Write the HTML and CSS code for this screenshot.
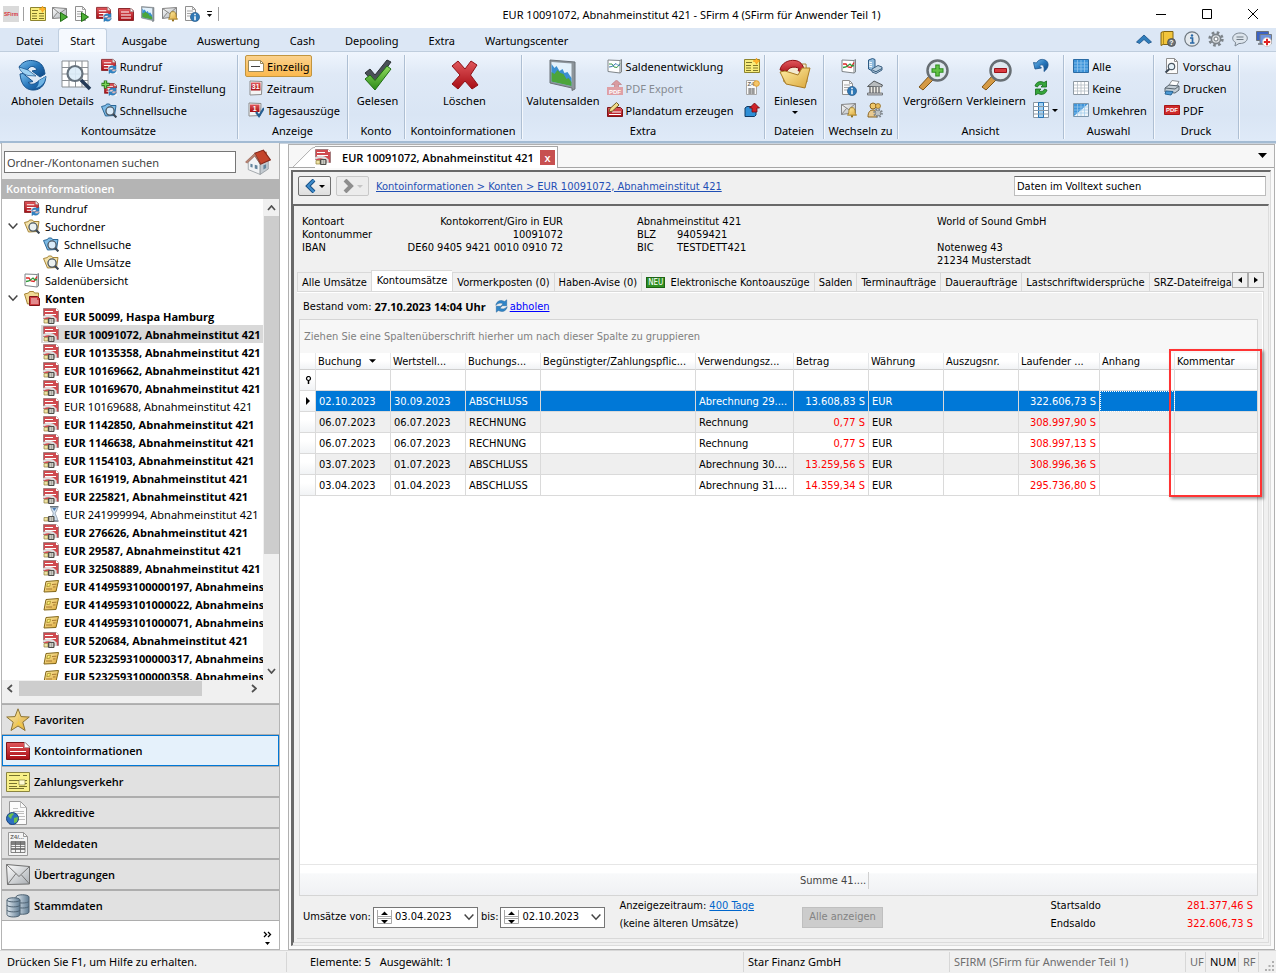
FILE: index.html
```html
<!DOCTYPE html>
<html lang="de">
<head>
    <meta charset="UTF-8">
    <meta name="viewport" content="width=device-width, initial-scale=1.0">
    <title>EUR 10091072, Abnahmeinstitut 421 - SFirm 4</title>
    <link rel="stylesheet" href="styles.css">
</head>
<body>
    <!-- icon sprite -->
    <svg class="sprite" width="0" height="0" aria-hidden="true">
        <defs>
            <linearGradient id="g-red" x1="0" y1="0" x2="0" y2="1"><stop offset="0" stop-color="#e0575c"/><stop offset="1" stop-color="#a80d14"/></linearGradient>
            <linearGradient id="g-blue" x1="0" y1="0" x2="1" y2="1"><stop offset="0" stop-color="#7cc0ee"/><stop offset="0.5" stop-color="#2878bd"/><stop offset="1" stop-color="#0c4380"/></linearGradient>
            <linearGradient id="g-green" x1="0" y1="0" x2="0" y2="1"><stop offset="0" stop-color="#8fdc5e"/><stop offset="1" stop-color="#2c8a17"/></linearGradient>
            <linearGradient id="g-gold" x1="0" y1="0" x2="1" y2="1"><stop offset="0" stop-color="#fff0a8"/><stop offset="1" stop-color="#dba63a"/></linearGradient>
            <linearGradient id="g-grey" x1="0" y1="0" x2="1" y2="1"><stop offset="0" stop-color="#ffffff"/><stop offset="1" stop-color="#a9aeb3"/></linearGradient>
            <linearGradient id="g-steel" x1="0" y1="0" x2="1" y2="0"><stop offset="0" stop-color="#dfe8ef"/><stop offset="1" stop-color="#5f7b92"/></linearGradient>
        </defs>

        <!-- small parts reused by other icons -->
        <symbol id="p-sync" viewBox="0 0 8 8"><path d="M.5 3.600C.8 1.600 2.400.4 4.400.7L6 1.200 7.200.2v3.600H3.800L5 2.600C3.400 1.800 2 2.200.5 3.600z" fill="#2f86c9" stroke="#1d5c94" stroke-width=".3"/><path d="M7.500 4.400C7.200 6.400 5.600 7.600 3.600 7.300L2 6.800.8 7.800V4.200h3.400L3 5.400c1.600.8 3 .4 4.500-1z" fill="#2f86c9" stroke="#1d5c94" stroke-width=".3"/></symbol>
        <symbol id="p-reddoc" viewBox="0 0 16 14"><path d="M.5 1.500h12.500l2.500 2.500v9.500h-15z" fill="url(#g-red)" stroke="#8c2a2e"/><path d="M12.500 1v3.500h3z" fill="#fff" stroke="#999" stroke-width=".6"/><path d="M3 5h8M3 8h10M3 11h10" stroke="#fff" stroke-width="1.100"/></symbol>
        <symbol id="p-lens" viewBox="0 0 10 10"><path d="M6.500 6.500l3 3" stroke="#3b4754" stroke-width="1.800"/><circle cx="4.200" cy="4.200" r="3.400" fill="#e9f3fb" fill-opacity=".85" stroke="#4b5762" stroke-width="1.100"/></symbol>
        <symbol id="p-info" viewBox="0 0 10 10"><circle cx="5" cy="5" r="4.600" fill="#2f78b5" stroke="#1c4f80" stroke-width=".6"/><path d="M5 1.800v1.400M5 4.300v4" stroke="#fff" stroke-width="1.500"/></symbol>
        <symbol id="p-gear" viewBox="0 0 16 16"><circle cx="8" cy="8" r="6.400" fill="none" stroke="#7c8389" stroke-width="2.600" stroke-dasharray="2.600 2.420"/><circle cx="8" cy="8" r="4.600" fill="#d8dcdf" stroke="#7c8389" stroke-width="1.600"/><circle cx="8" cy="8" r="2" fill="#fff" stroke="#6f767c"/></symbol>
        <symbol id="p-bell" viewBox="0 0 10 11"><path d="M5 .6c2.400 0 3.200 2 3.200 4 0 1.800.5 2.700 1.400 3.600H.4C1.300 7.300 1.800 6.400 1.800 4.600 1.800 2.600 2.600.6 5 .6z" fill="url(#g-gold)" stroke="#94701a" stroke-width=".8"/><circle cx="5" cy="9.400" r="1.100" fill="#94701a"/></symbol>

        <symbol id="i-form" viewBox="0 0 16 16"><path d="M.5 1.500h15v13H.5z" fill="#f8ec7c" stroke="#8d842e"/><path d="M2 4.500h6M2 7.500h5M2 10h5M2 12.500h5M9 7.500h5M9 10h5M9 12.500h5" stroke="#7e7628" stroke-width="1.100"/><path d="M12.500 0l1 2.200L16 3l-2.300 1-1.200 2.300-1-2.300L9 3l2.500-.8z" fill="#ffb52b" stroke="#f08c00" stroke-width=".5"/></symbol>
        <symbol id="i-mailrun" viewBox="0 0 16 16"><path d="M.5 1.500l14 1v9l-14 1z" fill="url(#g-grey)" stroke="#858585"/><path d="M.5 1.500l7 6 7-5M.5 12.500l5-6" fill="none" stroke="#858585"/><path d="M8.500 6.500v9l7-4.500z" fill="#4cae35" stroke="#1f6d12"/></symbol>
        <symbol id="i-docrun" viewBox="0 0 16 16"><path d="M1.500.5h7l3 3v11h-10z" fill="#fafafa" stroke="#8f8f8f"/><path d="M8.500.5v3h3M3 5.500h6M3 8h4M3 10.500h4" fill="none" stroke="#a5a5a5"/><path d="M7.500 6.500v9l7-4.500z" fill="#4cae35" stroke="#1f6d12"/></symbol>
        <symbol id="i-redsync" viewBox="0 0 16 16"><use href="#p-reddoc" x="0" y="0" width="15" height="13"/><path d="M7 8h9v8H7z" fill="#fff" fill-opacity=".7"/><use href="#p-sync" x="7" y="7" width="9" height="9"/></symbol>
        <symbol id="i-red" viewBox="0 0 16 16"><use href="#p-reddoc" x="0" y="1" width="16" height="14"/></symbol>
        <symbol id="i-chart" viewBox="0 0 32 32"><path d="M3 1l25 2v27l-3 1.500V29L3 24z" fill="#8d959b" stroke="#6b7278"/><path d="M4.500 3l20 1.500V27l-20-4.500z" fill="#e3f1fb"/><path d="M4.500 5l3 4 2-2 3 5 3-2 2 4 3-1 4 6v8l-20-4.500z" fill="#3b8fd0"/><path d="M4.500 13l3 2 3-4 3 3 3 1 3 5 2-1 3 4v4l-20-4.500z" fill="#4ca53a"/></symbol>
        <symbol id="i-mailbell" viewBox="0 0 16 16"><path d="M.5 2.500l14-1v9l-14 2z" fill="url(#g-grey)" stroke="#858585"/><path d="M.5 2.500l7 5 7-6M.500 12.500l5-6" fill="none" stroke="#858585"/><use href="#p-bell" x="6" y="5" width="10" height="11"/></symbol>
        <symbol id="i-docinfo" viewBox="0 0 16 16"><path d="M1.500.5h7l3 3v11h-10z" fill="#fafafa" stroke="#8f8f8f"/><path d="M8.500.5v3h3M3 5h6M3 7.500h5M3 10h3" fill="none" stroke="#a5a5a5"/><use href="#p-info" x="6" y="6" width="10" height="10"/></symbol>
        <symbol id="i-sync" viewBox="0 0 32 32"><path d="M2 8C6 2 12 .5 18 2c6 1.500 9 5 10 13l-5 3-8-6 5-1c-2-4-6-5-9-1l-2 4z" fill="url(#g-blue)" stroke="#17528c"/><path d="M2 8l9 3 8 6-8-.5C6 15 3 12 2 8z" fill="#9fd2f3" stroke="#17528c" stroke-width=".7"/><path d="M3 15l3-.5 10 8-5 1c3 3 7 2 11-2l7-4-1 5c-2 6-7 9-13 8.500-6-.5-11-5-12-16z" fill="url(#g-blue)" stroke="#17528c"/><path d="M22 21.500l7-4-2 6c-2 3-5 5-8 5.500 2-2 3-4 3-7.500z" fill="#6fb4e4"/></symbol>
        <symbol id="i-details" viewBox="0 0 32 32"><path d="M2 2h26v26H2zM9 2v26M15.500 2v26M22 2v26M2 8.500h26M2 15h26M2 21.500h26" fill="#fff" stroke="#8a8f94"/><path d="M21 21l9 9" stroke="#243a57" stroke-width="3.500"/><circle cx="15" cy="14.500" r="7.500" fill="#dcecf8" fill-opacity=".9" stroke="#66727d" stroke-width="2.200"/></symbol>
        <symbol id="i-redadd" viewBox="0 0 16 16"><use href="#p-reddoc" x="3" y="2" width="13" height="12"/><path d="M7 8h9v8H7z" fill="#fff" fill-opacity=".7"/><use href="#p-sync" x="7" y="7" width="9" height="9"/><path d="M4.500.5v8M.5 4.500h8" stroke="#1c6d12" stroke-width="3.400"/><path d="M4.500 1v7M1 4.500h7" stroke="#7bd35a" stroke-width="1.600"/></symbol>
        <symbol id="i-search-blue" viewBox="0 0 16 16"><path d="M.5 4.500l4-1 1-1.500h3l1 1.500h5.500l-1.500 10-9 .5z" fill="#7dbbe6" stroke="#2a6797"/><use href="#p-lens" x="4" y="4" width="12" height="12"/></symbol>
        <symbol id="i-search-gold" viewBox="0 0 16 16"><path d="M.5 4.500l4-1 1-1.500h3l1 1.500h5.500l-1.500 10-9 .5z" fill="#f4e3ab" stroke="#a58436"/><use href="#p-lens" x="4" y="4" width="12" height="12"/></symbol>
        <symbol id="i-oneline" viewBox="0 0 16 16"><path d="M.5 2.500h12l3 3v8H.5z" fill="#fff" stroke="#9c8a5a"/><path d="M12.500 2.500v3h3" fill="none" stroke="#9c8a5a"/><path d="M3 8.500h9" stroke="#444"/></symbol>
        <symbol id="i-check" viewBox="0 0 32 32"><path d="M3 14l5-4 5 6L25 1l4 2-16 22z" fill="#4a5157" stroke="#2c3135"/><path d="M3 20l5-4 5 5.500L25 7l4 3-16 21z" fill="url(#g-green)" stroke="#1f6d12"/></symbol>
        <symbol id="i-x" viewBox="0 0 32 32"><path d="M3 7l6-5 7 8 6-8 6 4-6.500 10L29 26l-6 4-7-8-7 8-6-5 8-9z" fill="url(#g-red)" stroke="#8e1015"/></symbol>
        <symbol id="i-line" viewBox="0 0 16 16"><path d="M1 2l12 .5 1.500-1V14L13 15 1 13.500z" fill="#fff" stroke="#7e8488"/><path d="M13 2.500V15" stroke="#7e8488"/><path d="M2 6h3l2 3 3 .5 3-5" fill="none" stroke="#df2626" stroke-width="1.300"/><path d="M2 9.500l3-.5 4-3 2 2 2-.5" fill="none" stroke="#2e9a3a" stroke-width="1.300"/></symbol>
        <symbol id="i-line-soft" viewBox="0 0 16 16"><path d="M1 2l12 .5 1.500-1V14L13 15 1 13.500z" fill="#fff" stroke="#7e8488"/><path d="M13 2.500V15" stroke="#7e8488"/><path d="M2 6h3l2 3 3 .5 3-4" fill="none" stroke="#3a9a4a"/><path d="M2 9l3-.5 4-3 2 2 2-.5" fill="none" stroke="#3c78b4"/></symbol>
        <symbol id="i-plan" viewBox="0 0 16 16"><path d="M.5 5.500h13l2 2v7H.5z" fill="url(#g-red)" stroke="#7d1418"/><path d="M5 10h9M2 12.500h12" stroke="#fff"/><path d="M2 10l1-3.500L9.500.5l2.500 2.500-6.500 6z" fill="#f3dd8a" stroke="#6d5b24"/></symbol>
        <symbol id="i-import" viewBox="0 0 16 16"><path d="M1 6l2-1.500h9V13l-1.500 1.500H1z" fill="#2f8fd6" stroke="#123a63"/><path d="M10.500 1l5 5h-2.500v4h-5V6H5.500z" fill="#cf2228" stroke="#6e0b10" stroke-width=".8"/></symbol>
        <symbol id="i-openfolder" viewBox="0 0 32 32"><path d="M2 9l8-2 3-2h14l1 18H5z" fill="#f3ead2" stroke="#a88738"/><path d="M1 11C2 4 10 .5 16 1.500c5 .5 8 4 9 9l1 5-7-4 1-2C16 7 10 8 8 12z" fill="url(#g-red)" stroke="#8e1015"/><path d="M1 13l5-1 13 4 4-7h8l-5 20-19-4z" fill="url(#g-gold)" stroke="#a87a24"/></symbol>
        <symbol id="i-server" viewBox="0 0 16 16"><path d="M1.500 2l4-1.500L8 1.500v9l-3.500 2-3-1.500z" fill="#8db9dc" stroke="#2d5b84"/><path d="M2 4l3 .8M2 6l3 .8M2 8l3 .8" stroke="#fff"/><path d="M5 11l6-3.500 4 1.500v3l-6 3.500-4-1.500z" fill="#b9cfe0" stroke="#3a5f80"/><path d="M6 12.500l3 1.200 6-3.200" fill="none" stroke="#3a5f80"/></symbol>
        <symbol id="i-bank" viewBox="0 0 16 16"><path d="M.5 6.500L7 1l8.500 4-1 2z" fill="#b9bcbe" stroke="#54585b"/><path d="M2 7h12v6H2z" fill="#eceae2"/><path d="M3 7v6M6 7v6M9 7v6M12 7v6" stroke="#75777a" stroke-width="1.500"/><path d="M.5 13h15v2H.5z" fill="#c6c8c9" stroke="#54585b" stroke-width=".7"/></symbol>
        <symbol id="i-users" viewBox="0 0 16 16"><circle cx="6" cy="4" r="3" fill="#f0c86a" stroke="#8b6520"/><path d="M1 15c0-5 2-7 5-7s4 2 4 7z" fill="#e8c990" stroke="#8b6520"/><circle cx="11" cy="4" r="2.500" fill="#e9bd5b" stroke="#8b6520" stroke-width=".7"/><use href="#p-gear" x="6" y="6" width="10" height="10"/></symbol>
        <symbol id="i-zoomin" viewBox="0 0 32 32"><path d="M2 28l11-12 4 4L6 31z" fill="#d59a45" stroke="#7d5418"/><circle cx="20.500" cy="11.500" r="10" fill="#dfe8ee" stroke="#676e73" stroke-width="2.500"/><path d="M20.500 5.500v12M14.500 11.500h12" stroke="#2b8a1c" stroke-width="4.500"/><path d="M20.500 6.500v10M15.500 11.500h10" stroke="#62c245" stroke-width="2.500"/></symbol>
        <symbol id="i-zoomout" viewBox="0 0 32 32"><path d="M2 28l11-12 4 4L6 31z" fill="#d59a45" stroke="#7d5418"/><circle cx="20.500" cy="11.500" r="10" fill="#dfe8ee" stroke="#676e73" stroke-width="2.500"/><path d="M14.500 9.500h12v4h-12z" fill="#d93a3f" stroke="#9b1218"/></symbol>
        <symbol id="i-undo" viewBox="0 0 16 16"><path d="M.5 4.500L2 11l6.500-1L6.500 8C9 5.500 12 7 11 13.500 16 10 16.500 4 12 2 8.500.5 5 2 3.500 5z" fill="url(#g-blue)" stroke="#17528c" stroke-width=".8"/></symbol>
        <symbol id="i-refresh" viewBox="0 0 16 16"><path d="M2 6c1-4 5-5.500 9-3.500L13.500 1v6H8l2-2C7 4 5 5 4.500 7z" fill="#36a63a" stroke="#13681b" stroke-width=".8"/><path d="M14 10c-1 4-5 5.500-9 3.500L2.500 15V9H8l-2 2c3 1 5 0 5.500-2z" fill="#36a63a" stroke="#13681b" stroke-width=".8"/></symbol>
        <symbol id="i-columns" viewBox="0 0 16 16"><path d="M.5.5h15v15H.5z" fill="#fff" stroke="#8a97a3"/><path d="M5.500.5h5v15h-5z" fill="#9fd0f3" stroke="#2473b5"/><path d="M.5 4.500h15M.5 8.500h15M.5 12h15" stroke="#8a97a3"/></symbol>
        <symbol id="i-gridall" viewBox="0 0 16 16"><path d="M.5 1.500h15v13H.5z" fill="#3f95da" stroke="#2a6ba4"/><path d="M4.500 2v12M8 2v12M11.500 2v12M1 5h14M1 8h14M1 11h14" stroke="#8fc4ee" stroke-width=".8"/></symbol>
        <symbol id="i-gridnone" viewBox="0 0 16 16"><path d="M.5 1.500h15v13H.5z" fill="#fff" stroke="#8f9aa4"/><path d="M4.500 2v12M8 2v12M11.500 2v12M1 5h14M1 8h14M1 11h14" stroke="#b4bcc4" stroke-width=".8"/></symbol>
        <symbol id="i-gridinv" viewBox="0 0 16 16"><path d="M.5 1.500h15v13H.5z" fill="#eef4f9" stroke="#7d97ad"/><path d="M1 2h14L1 14z" fill="#3f95da"/><path d="M4.500 2v12M8 2v12M11.500 2v12M1 5h14M1 8h14M1 11h14" stroke="#9cc8ea" stroke-width=".7"/></symbol>
        <symbol id="i-preview" viewBox="0 0 16 16"><path d="M2.500.5h8l3 3v12h-11z" fill="#fcfcfc" stroke="#8f8f8f"/><path d="M10.500.5v3h3" fill="none" stroke="#8f8f8f"/><path d="M6 10.500l-4.500 4" stroke="#3b4754" stroke-width="2"/><circle cx="7.500" cy="8.500" r="3.200" fill="#e6f2fa" stroke="#4b5762" stroke-width="1.200"/></symbol>
        <symbol id="i-printer" viewBox="0 0 16 16"><path d="M5 5l3-4.500 7 1L12 7z" fill="#fff" stroke="#8a8f93"/><path d="M1 8l4-3 10 1v4l-4 3-10-1z" fill="#c3cdd5" stroke="#58656f"/><path d="M1 8l10 1 4-3" fill="none" stroke="#58656f"/><path d="M2 11l7 .5-2 3.500-6-1z" fill="#4c9ad6" stroke="#2a6797"/></symbol>
        <symbol id="i-up" viewBox="0 0 16 16"><path d="M.5 11L8 4l7.500 7-3 1.500L8 8.500l-4.500 4z" fill="#2f7dbb" stroke="#174f86" stroke-width=".8"/></symbol>
        <symbol id="i-info" viewBox="0 0 16 16"><circle cx="8" cy="8" r="7.200" fill="#e4e9ed" stroke="#6e7880" stroke-width="1.200"/><circle cx="8" cy="4.500" r="1.200" fill="#2968a6"/><path d="M6 7h2.500v4.500M6 12h4.500" fill="none" stroke="#2968a6" stroke-width="1.700"/></symbol>
        <symbol id="i-chat" viewBox="0 0 16 16"><path d="M8 2c4 0 7.300 2.200 7.300 5.200S12 12.500 8 12.500l-1 0L3 15l.6-3.500C1.800 10.500.700 9 .700 7.200.700 4.200 4 2 8 2z" fill="#dce4ec" stroke="#7a8590"/><path d="M4.500 6h7M4.500 8.500h7" stroke="#6f7a84"/></symbol>
        <symbol id="i-remote" viewBox="0 0 16 16"><path d="M.5.5h12v9H.5z" fill="#3b62c4" stroke="#6c7177"/><path d="M2 13h9" stroke="#6c7177" stroke-width="1.500"/><path d="M4 3.500h11.500v9H4z" fill="#6f93dd" stroke="#737a82"/><circle cx="11" cy="11" r="4.600" fill="#fff" stroke="#b9b9b9" stroke-width=".6"/><path d="M11 7.800v6.400M7.800 11h6.400" stroke="#df2323" stroke-width="2"/></symbol>
        <symbol id="i-house" viewBox="0 0 24 24"><path d="M17 2.500h3v6h-3z" fill="#a9542e"/><path d="M3 12l6-6 5 8v9.500L3 19z" fill="#f1f3f5" stroke="#8d9499" stroke-width=".7"/><path d="M14 13l7.500-2.500V18.500L14 23.500z" fill="#c3cad0" stroke="#8d9499" stroke-width=".7"/><path d="M9 4L17 1l6.500 9-9 4z" fill="#c4452c" stroke="#84281a"/><path d="M9 4L.500 12l1.500 1 7-6.500 5.500 8z" fill="#b98573" stroke="#8a4a3a" stroke-width=".5"/><path d="M5 13.500l2 .5v3l-2-.5zM9 14.500l2.500.7v3.500L9 18zM17 15l2.500-1v3.500L17 19z" fill="#62849c"/></symbol>
        <symbol id="i-konten" viewBox="0 0 16 16"><path d="M.5 4l4-1 1-1.500h4l1 1.500h4V13l-11 1z" fill="#f0d995" stroke="#a58436"/><path d="M5.500 6.500h8l2 2v7h-10z" fill="#cf3d42" stroke="#7d1418"/><path d="M7 9h6M7 11h7.500M7 13h7.500" stroke="#fff" stroke-width=".8"/></symbol>
        <symbol id="i-acct" viewBox="0 0 16 16"><path d="M.5.5h13l2 2v11H.5z" fill="#cf4a4f" stroke="#a57e80"/><path d="M13 0v3h3z" fill="#fff"/><path d="M2 3.500h8M2 6.500h11" stroke="#fff" stroke-width="1.200"/><path d="M0 9.500c4-2 9-2 12.500 1.500V14" fill="none" stroke="#dcdcdc" stroke-width="2.400"/><path d="M0 11h5v5H0z" fill="#fff"/><path d="M1 11.500h4V15H1z" fill="#efe3a5" stroke="#8c7b3a" stroke-width=".7"/><path d="M5.500 10.500h5.500v5H5.500z" fill="#9b9b93" stroke="#4e4e4a"/><path d="M7.300 11v4M9.300 11v4" stroke="#e6e6e0" stroke-width=".8"/></symbol>
        <symbol id="i-hour" viewBox="0 0 16 16"><path d="M7 .8h8.500M8 15h7.500" stroke="#6c7680" stroke-width="1.500"/><path d="M8 1.500h6.500c0 3-2.200 4.500-2.200 6s2.200 3.500 2.200 7H8c0-3.500 2.200-5.500 2.200-7S8 4.500 8 1.500z" fill="#d3e2f1" stroke="#8796a5" stroke-width=".8"/><path d="M9.300 2h4l-2 3z" fill="#4a7db5"/><path d="M1 11.500h4V15H1z" fill="#efe3a5" stroke="#8c7b3a" stroke-width=".7"/><path d="M5.500 10.500h5.500v5H5.500z" fill="#9b9b93" stroke="#4e4e4a"/><path d="M7.300 11v4M9.300 11v4" stroke="#e6e6e0" stroke-width=".8"/></symbol>
        <symbol id="i-card" viewBox="0 0 16 16"><path d="M3 3.500l12.500-1-2.500 11-12 .5z" fill="url(#g-gold)" stroke="#826719"/><path d="M4.500 5.500l3-.3-.7 3-3 .3z" fill="#fff27a" stroke="#9a8218" stroke-width=".7"/><path d="M9 6.500l4.500-.3M3 11h6M10 9l2.500-.1" stroke="#a0702a" stroke-width=".9"/></symbol>

        <symbol id="i-star" viewBox="0 0 24 24"><path d="M12 .8l3 7.800 8.300.4-6.500 5.200 2.300 8.300L12 18l-7 4.500 2.200-8.300L.700 9 9 8.600z" fill="url(#g-gold)" stroke="#8b7335"/><path d="M12 3l.5 10-5 7L12 16l6 4-5-7z" fill="#f8cf3c" fill-opacity=".7"/></symbol>
        <symbol id="i-rednav" viewBox="0 0 24 24"><path d="M.5 3.500h18.500l4.500 4.500v12.500H.5z" fill="url(#g-red)" stroke="#7d1418"/><path d="M18.500 3v5.500h5.500z" fill="#fff" stroke="#999" stroke-width=".6"/><path d="M4 8.500h13M4 12.500h16M4 16.500h16" stroke="#fff"/></symbol>
        <symbol id="i-pay" viewBox="0 0 24 24"><path d="M.5 2.500h23v19H.5z" fill="#f8f088" stroke="#8a8440"/><path d="M3 5.500h11M17 5.500h4M3 10.500h18M3 13.500h8M13 13.500h8M3 16.500h8M13 16.500h8M3 18.500h15" stroke="#77722e"/><path d="M13 10h6v5h-6z" fill="#fffbd0" stroke="#77722e" stroke-width=".6"/></symbol>
        <symbol id="i-akk" viewBox="0 0 24 24"><path d="M3.500.5h11l6 6v17h-17z" fill="#fbfbfb" stroke="#999"/><path d="M14.500.5v6h6M7 7.500h5M7 10.500h11M7 12.500h11M12 15.500h7M12 18.500h7" fill="none" stroke="#b0b0b0" stroke-width=".8"/><circle cx="6.500" cy="17.500" r="6" fill="#2d6fc0" stroke="#19447e"/><path d="M2 15c2-3 5-3.500 6-2l-2 2-1 3zM8 17l4-1-1 5-3 1z" fill="#6cc04a"/></symbol>
        <symbol id="i-envelope" viewBox="0 0 24 24"><path d="M.5 1.500l23 2v17.500l-22 .5z" fill="url(#g-grey)" stroke="#6f6f6f"/><path d="M.5 1.500l12.500 12 10.500-10M1.500 21.500l8.500-11M23.500 21l-8-9" fill="none" stroke="#777"/></symbol>
        <symbol id="i-db" viewBox="0 0 24 24"><path d="M10 3c0-3 13-3 13 0v15c0 3-13 3-13 0z" fill="url(#g-steel)" stroke="#4f6373"/><path d="M10 7.500c2 2 11 2 13 0M10 12.500c2 2 11 2 13 0" fill="none" stroke="#4f6373"/><path d="M1 6c0-3 13-3 13 0v14.500c0 3.300-13 3.300-13 0z" fill="url(#g-steel)" stroke="#4f6373"/><path d="M1 6c0 2.500 13 2.500 13 0M1 11c0 2.500 13 2.500 13 0M1 16c0 2.500 13 2.500 13 0" fill="none" stroke="#4f6373"/></symbol>
        <symbol id="i-chev-down" viewBox="0 0 8 8"><path d="M.5 2L4 5.800 7.500 2" fill="none" stroke="#444" stroke-width="1.200"/></symbol>
        <symbol id="i-tri" viewBox="0 0 8 4"><path d="M0 0h8L4 4z" fill="currentColor"/></symbol>
        <symbol id="i-tri-r" viewBox="0 0 4 8"><path d="M0 0v8l4-4z" fill="currentColor"/></symbol>
    </svg>

    <div class="window">
        <header class="titlebar">
            <div class="quick">
                <svg class="logo" viewBox="0 0 16 16"><path d="M0 0h16v16H0z" fill="#dadada"/><text x="8" y="10" class="logo-text">SFirm</text></svg>
                <span class="quick-sep"></span>
                <button aria-label="Neu"><svg class="ico"><use href="#i-form"/></svg></button>
                <button aria-label="Senden"><svg class="ico"><use href="#i-mailrun"/></svg></button>
                <button aria-label="Ausführen"><svg class="ico"><use href="#i-docrun"/></svg></button>
                <button aria-label="Rundruf"><svg class="ico"><use href="#i-redsync"/></svg></button>
                <button aria-label="Konten"><svg class="ico"><use href="#i-red"/></svg></button>
                <button aria-label="Valutensalden"><svg class="ico"><use href="#i-chart"/></svg></button>
                <button aria-label="Benachrichtigung"><svg class="ico"><use href="#i-mailbell"/></svg></button>
                <button aria-label="Protokoll"><svg class="ico"><use href="#i-docinfo"/></svg></button>
                <button class="quick-more" aria-label="Anpassen"><svg width="5" height="7"><path d="M0 .5h5" stroke="#111"/><path d="M0 3h5L2.500 6z" fill="#111"/></svg></button>
                <span class="quick-sep"></span>
            </div>
            <div class="title">EUR 10091072, Abnahmeinstitut 421 - SFirm 4 (SFirm für Anwender Teil 1)</div>
            <div class="win-buttons">
                <button aria-label="Minimieren"><svg width="10" height="10"><path d="M0 5.500h10" stroke="#000"/></svg></button>
                <button aria-label="Maximieren"><svg width="10" height="10"><path d="M.5.5h9v9h-9z" fill="none" stroke="#000"/></svg></button>
                <button aria-label="Schließen"><svg width="10" height="10"><path d="M0 0l10 10M10 0L0 10" stroke="#000"/></svg></button>
            </div>
        </header>

        <nav class="menu">
            <a href="#">Datei</a>
            <a href="#" class="active">Start</a>
            <a href="#">Ausgabe</a>
            <a href="#">Auswertung</a>
            <a href="#">Cash</a>
            <a href="#">Depooling</a>
            <a href="#">Extra</a>
            <a href="#">Wartungscenter</a>
            <div class="menu-tools">
                <button aria-label="Menüband einklappen"><svg class="ico"><use href="#i-up"/></svg></button>
                <button aria-label="Hilfe"><svg class="ico" viewBox="0 0 16 16"><path d="M1 1.500L3.500.5H13v13H3l-2 1z" fill="#f2c53c" stroke="#806414"/><path d="M3.500.5v13" stroke="#b58e1b"/><circle cx="11.500" cy="11.500" r="4" fill="#6d7378" stroke="#3c4145" stroke-width=".7"/><text x="11.500" y="14" class="ico-num">?</text></svg></button>
                <button aria-label="Info"><svg class="ico"><use href="#i-info"/></svg></button>
                <button aria-label="Einstellungen"><svg class="ico"><use href="#p-gear"/></svg></button>
                <button aria-label="Nachrichten"><svg class="ico"><use href="#i-chat"/></svg></button>
                <button aria-label="Fernwartung"><svg class="ico"><use href="#i-remote"/></svg></button>
            </div>
        </nav>

        <div class="ribbon">
            <section class="group">
                <div class="tools">
                    <button class="big"><svg><use href="#i-sync"/></svg>Abholen</button>
                    <button class="big"><svg><use href="#i-details"/></svg>Details</button>
                    <div class="stack">
                        <button><svg class="ico"><use href="#i-redsync"/></svg>Rundruf</button>
                        <button><svg class="ico"><use href="#i-redadd"/></svg>Rundruf- Einstellung</button>
                        <button><svg class="ico"><use href="#i-search-blue"/></svg>Schnellsuche</button>
                    </div>
                </div>
                <h2>Kontoumsätze</h2>
            </section>
            <section class="group">
                <div class="tools">
                    <div class="stack">
                        <button class="pressed"><svg class="ico"><use href="#i-oneline"/></svg>Einzeilig</button>
                        <button><svg class="ico" viewBox="0 0 16 16"><path d="M2 1l12 .5-.5 13L2 15z" fill="#f4f4f4" stroke="#8d8d8d"/><path d="M3 2.500h9.500v8H3z" fill="url(#g-red)"/><text x="7.700" y="9.300" class="ico-num">31</text></svg>Zeitraum</button>
                        <button><svg class="ico" viewBox="0 0 16 16"><path d="M1 1l12 .5-.5 12L1 14z" fill="#f4f4f4" stroke="#8d8d8d"/><path d="M2 2.500h9.500V10H2z" fill="url(#g-red)"/><text x="6.700" y="9" class="ico-num">1</text><path d="M8 10l3 4 5-8" fill="none" stroke="#275f92" stroke-width="2.200"/></svg>Tagesauszüge</button>
                    </div>
                </div>
                <h2>Anzeige</h2>
            </section>
            <section class="group">
                <div class="tools">
                    <button class="big"><svg><use href="#i-check"/></svg>Gelesen</button>
                </div>
                <h2>Konto</h2>
            </section>
            <section class="group">
                <div class="tools">
                    <button class="big"><svg><use href="#i-x"/></svg>Löschen</button>
                </div>
                <h2>Kontoinformationen</h2>
            </section>
            <section class="group">
                <div class="tools">
                    <button class="big"><svg><use href="#i-chart"/></svg>Valutensalden</button>
                    <div class="stack">
                        <button><svg class="ico"><use href="#i-line-soft"/></svg>Saldenentwicklung</button>
                        <button disabled><svg class="ico" viewBox="0 0 16 16"><path d="M9.500 0l5 4.500h-3V8h-4V4.500h-3z" fill="#d99ba0" stroke="#b9747a" stroke-width=".6"/><path d="M0 7h16v8H0z" fill="#dfa0a5"/><text x="8" y="13.500" class="ico-pdf">PDF</text></svg>PDF Export</button>
                        <button><svg class="ico"><use href="#i-plan"/></svg>Plandatum erzeugen</button>
                    </div>
                    <div class="stack">
                        <button aria-label="Auftrag"><svg class="ico"><use href="#i-form"/></svg></button>
                        <button aria-label="Meldung"><svg class="ico" viewBox="0 0 16 16"><path d="M2.500.5h9l1 1v13h-10z" fill="#fafafa" stroke="#a9a9a9"/><text x="7" y="6.300" class="ico-z4">Z4</text><path d="M4 9h7M4 11h7M4 13h7M6 8v6M9 8v6" stroke="#7b7b7b"/><circle cx="12.500" cy="3.500" r="2.800" fill="#f5c66a" stroke="#e0a030"/></svg></button>
                        <button aria-label="Import"><svg class="ico"><use href="#i-import"/></svg></button>
                    </div>
                </div>
                <h2>Extra</h2>
            </section>
            <section class="group">
                <div class="tools">
                    <button class="big"><svg><use href="#i-openfolder"/></svg>Einlesen<svg class="tri"><use href="#i-tri"/></svg></button>
                </div>
                <h2>Dateien</h2>
            </section>
            <section class="group">
                <div class="tools">
                    <div class="stack">
                        <button aria-label="Salden"><svg class="ico"><use href="#i-line"/></svg></button>
                        <button aria-label="Protokoll"><svg class="ico"><use href="#i-docinfo"/></svg></button>
                        <button aria-label="Benachrichtigungen"><svg class="ico"><use href="#i-mailbell"/></svg></button>
                    </div>
                    <div class="stack">
                        <button aria-label="Server"><svg class="ico"><use href="#i-server"/></svg></button>
                        <button aria-label="Bank"><svg class="ico"><use href="#i-bank"/></svg></button>
                        <button aria-label="Benutzer"><svg class="ico"><use href="#i-users"/></svg></button>
                    </div>
                </div>
                <h2>Wechseln zu</h2>
            </section>
            <section class="group">
                <div class="tools">
                    <button class="big"><svg><use href="#i-zoomin"/></svg>Vergrößern</button>
                    <button class="big"><svg><use href="#i-zoomout"/></svg>Verkleinern</button>
                    <div class="stack">
                        <button aria-label="Zurücksetzen"><svg class="ico"><use href="#i-undo"/></svg></button>
                        <button aria-label="Aktualisieren"><svg class="ico"><use href="#i-refresh"/></svg></button>
                        <button aria-label="Spalten"><svg class="ico"><use href="#i-columns"/></svg><svg class="tri"><use href="#i-tri"/></svg></button>
                    </div>
                </div>
                <h2>Ansicht</h2>
            </section>
            <section class="group">
                <div class="tools">
                    <div class="stack">
                        <button><svg class="ico"><use href="#i-gridall"/></svg>Alle</button>
                        <button><svg class="ico"><use href="#i-gridnone"/></svg>Keine</button>
                        <button><svg class="ico"><use href="#i-gridinv"/></svg>Umkehren</button>
                    </div>
                </div>
                <h2>Auswahl</h2>
            </section>
            <section class="group">
                <div class="tools">
                    <div class="stack">
                        <button><svg class="ico"><use href="#i-preview"/></svg>Vorschau</button>
                        <button><svg class="ico"><use href="#i-printer"/></svg>Drucken</button>
                        <button><svg class="ico" viewBox="0 0 16 16"><path d="M.5 3.500h15v9H.5z" fill="#cf2a2a" stroke="#a81818"/><text x="8" y="10.300" class="ico-pdf">PDF</text></svg>PDF</button>
                    </div>
                </div>
                <h2>Druck</h2>
            </section>
        </div>

        <div class="workspace">
            <aside class="sidebar">
                <div class="side-search">
                    <input type="text" value="Ordner-/Kontonamen suchen" aria-label="Ordner-/Kontonamen suchen">
                    <button aria-label="Startseite"><svg><use href="#i-house"/></svg></button>
                </div>
                <h2 class="side-title">Kontoinformationen</h2>
                <div class="tree-wrap">
                    <ul class="tree">
                        <li class="top"><svg class="ico"><use href="#i-redsync"/></svg>Rundruf</li>
                        <li class="top open"><svg class="twist"><use href="#i-chev-down"/></svg><svg class="ico"><use href="#i-search-gold"/></svg>Suchordner</li>
                        <li><svg class="ico"><use href="#i-search-blue"/></svg>Schnellsuche</li>
                        <li><svg class="ico"><use href="#i-search-gold"/></svg>Alle Umsätze</li>
                        <li class="top"><svg class="ico"><use href="#i-line"/></svg>Saldenübersicht</li>
                        <li class="top open bold"><svg class="twist"><use href="#i-chev-down"/></svg><svg class="ico"><use href="#i-konten"/></svg>Konten</li>
                        <li class="bold"><svg class="ico"><use href="#i-acct"/></svg>EUR 50099, Haspa Hamburg</li>
                        <li class="bold selected"><svg class="ico"><use href="#i-acct"/></svg>EUR 10091072, Abnahmeinstitut 421</li>
                        <li class="bold"><svg class="ico"><use href="#i-acct"/></svg>EUR 10135358, Abnahmeinstitut 421</li>
                        <li class="bold"><svg class="ico"><use href="#i-acct"/></svg>EUR 10169662, Abnahmeinstitut 421</li>
                        <li class="bold"><svg class="ico"><use href="#i-acct"/></svg>EUR 10169670, Abnahmeinstitut 421</li>
                        <li><svg class="ico"><use href="#i-acct"/></svg>EUR 10169688, Abnahmeinstitut 421</li>
                        <li class="bold"><svg class="ico"><use href="#i-acct"/></svg>EUR 1142850, Abnahmeinstitut 421</li>
                        <li class="bold"><svg class="ico"><use href="#i-acct"/></svg>EUR 1146638, Abnahmeinstitut 421</li>
                        <li class="bold"><svg class="ico"><use href="#i-acct"/></svg>EUR 1154103, Abnahmeinstitut 421</li>
                        <li class="bold"><svg class="ico"><use href="#i-acct"/></svg>EUR 161919, Abnahmeinstitut 421</li>
                        <li class="bold"><svg class="ico"><use href="#i-acct"/></svg>EUR 225821, Abnahmeinstitut 421</li>
                        <li><svg class="ico"><use href="#i-hour"/></svg>EUR 241999994, Abnahmeinstitut 421</li>
                        <li class="bold"><svg class="ico"><use href="#i-acct"/></svg>EUR 276626, Abnahmeinstitut 421</li>
                        <li class="bold"><svg class="ico"><use href="#i-acct"/></svg>EUR 29587, Abnahmeinstitut 421</li>
                        <li class="bold"><svg class="ico"><use href="#i-acct"/></svg>EUR 32508889, Abnahmeinstitut 421</li>
                        <li class="bold"><svg class="ico"><use href="#i-card"/></svg>EUR 4149593100000197, Abnahmeinstitut 421</li>
                        <li class="bold"><svg class="ico"><use href="#i-card"/></svg>EUR 4149593101000022, Abnahmeinstitut 421</li>
                        <li class="bold"><svg class="ico"><use href="#i-card"/></svg>EUR 4149593101000071, Abnahmeinstitut 421</li>
                        <li class="bold"><svg class="ico"><use href="#i-acct"/></svg>EUR 520684, Abnahmeinstitut 421</li>
                        <li class="bold"><svg class="ico"><use href="#i-card"/></svg>EUR 5232593100000317, Abnahmeinstitut 421</li>
                        <li class="bold"><svg class="ico"><use href="#i-card"/></svg>EUR 5232593100000358, Abnahmeinstitut 421</li>
                    </ul>
                    <div class="vscroll">
                        <svg width="9" height="6"><path d="M1 5l3.500-4L8 5" fill="none" stroke="#505050" stroke-width="1.700"/></svg>
                        <div class="vthumb"></div>
                        <svg width="9" height="6"><path d="M1 1l3.500 4L8 1" fill="none" stroke="#505050" stroke-width="1.700"/></svg>
                    </div>
                </div>
                <div class="hscroll">
                    <svg width="6" height="9"><path d="M5 1L1 4.500 5 8" fill="none" stroke="#505050" stroke-width="1.700"/></svg>
                    <div class="hthumb"></div>
                    <svg width="6" height="9"><path d="M1 1l4 3.500L1 8" fill="none" stroke="#505050" stroke-width="1.700"/></svg>
                </div>
                <div class="splitter"></div>
                <nav class="side-nav">
                    <button><svg><use href="#i-star"/></svg>Favoriten</button>
                    <button class="current"><svg><use href="#i-rednav"/></svg>Kontoinformationen</button>
                    <button><svg><use href="#i-pay"/></svg>Zahlungsverkehr</button>
                    <button><svg><use href="#i-akk"/></svg>Akkreditive</button>
                    <button><svg viewBox="0 0 24 24"><path d="M2.500.5h15l4 4v19h-19z" fill="#f4f4f4" stroke="#999"/><path d="M17.500.5v4h4" fill="none" stroke="#999"/><text x="11" y="7" class="ico-z4">Z4/...</text><path d="M5 10h14v3H5zM5 16h14v2H5z" fill="#808080"/><path d="M5 9.500h14v11H5zM9.500 9.500v11M14.500 9.500v11M5 14.500h14" fill="none" stroke="#666" stroke-width=".8"/></svg>Meldedaten</button>
                    <button><svg><use href="#i-envelope"/></svg>Übertragungen</button>
                    <button><svg><use href="#i-db"/></svg>Stammdaten</button>
                </nav>
                <div class="side-more">
                    <button aria-label="Weitere Bereiche"><svg width="9" height="15"><path d="M1 1l2.500 2.500L1 6M5 1l2.500 2.500L5 6" fill="none" stroke="#000" stroke-width="1.300"/><path d="M2 11h5l-2.500 3z"/></svg></button>
                </div>
            </aside>

            <main class="document">
                <div class="doc-tabs">
                    <svg class="slant" viewBox="0 0 24 22"><path d="M24 0v22H0L20 2q2-2 4-2z" fill="#fff"/><path d="M0 22L20 2q2-1.500 4-1.500" fill="none" stroke="#a6a6a6"/></svg>
                    <div class="doc-tab">
                        <svg class="ico"><use href="#i-acct"/></svg>
                        <span>EUR 10091072, Abnahmeinstitut 421</span>
                        <button aria-label="Schließen">x</button>
                    </div>
                    <button class="doc-list" aria-label="Fensterliste"><svg width="9" height="5"><path d="M0 0h9L4.500 5z"/></svg></button>
                </div>
                <div class="frame">
                    <div class="toolbar">
                        <button class="nav-btn" aria-label="Zurück"><svg width="11" height="14"><path d="M9 1L3 7l6 6" fill="none" stroke="#174f86" stroke-width="4"/><path d="M9 1L3 7l6 6" fill="none" stroke="#3d8ccb" stroke-width="2"/></svg><svg class="tri"><use href="#i-tri"/></svg></button>
                        <button class="nav-btn" aria-label="Vor" disabled><svg width="11" height="14"><path d="M2 1l6 6-6 6" fill="none" stroke="#8e8e8e" stroke-width="4"/></svg><svg class="tri"><use href="#i-tri"/></svg></button>
                        <a class="crumbs" href="#">Kontoinformationen &gt; Konten &gt; EUR 10091072, Abnahmeinstitut 421</a>
                        <input class="fulltext" type="text" value="Daten im Volltext suchen" aria-label="Daten im Volltext suchen">
                    </div>
                    <div class="panel">
                        <div class="info">
                            <dl class="account">
                                <dt>Kontoart</dt><dd>Kontokorrent/Giro in EUR</dd>
                                <dt>Kontonummer</dt><dd>10091072</dd>
                                <dt>IBAN</dt><dd>DE60 9405 9421 0010 0910 72</dd>
                            </dl>
                            <div>
                                <div>Abnahmeinstitut 421</div>
                                <dl class="bank">
                                    <dt>BLZ</dt><dd>94059421</dd>
                                    <dt>BIC</dt><dd>TESTDETT421</dd>
                                </dl>
                            </div>
                            <address>World of Sound GmbH<br><br>Notenweg 43<br>21234 Musterstadt</address>
                        </div>
                        <div class="tabs">
                            <div class="tab-list">
                                <button>Alle Umsätze</button>
                                <button class="active">Kontoumsätze</button>
                                <button>Vormerkposten (0)</button>
                                <button>Haben-Avise (0)</button>
                                <button><span class="neu">NEU</span>Elektronische Kontoauszüge</button>
                                <button>Salden</button>
                                <button>Terminaufträge</button>
                                <button>Daueraufträge</button>
                                <button>Lastschriftwidersprüche</button>
                                <button>SRZ-Dateifreigabe</button>
                            </div>
                            <button class="tab-arrow" aria-label="Nach links"><svg width="4" height="6"><path d="M4 0v6L0 3z"/></svg></button>
                            <button class="tab-arrow" aria-label="Nach rechts"><svg width="4" height="6"><path d="M0 0v6l4-3z"/></svg></button>
                        </div>
                        <div class="tab-page">
                            <div class="state">
                                <span>Bestand vom:</span>
                                <strong>27.10.2023 14:04 Uhr</strong>
                                <svg><use href="#p-sync"/></svg>
                                <a href="#">abholen</a>
                            </div>
                            <div class="grid">
                                <div class="group-hint">Ziehen Sie eine Spaltenüberschrift hierher um nach dieser Spalte zu gruppieren</div>
                                <div class="table-wrap">
                                    <table>
                                        <colgroup>
                                            <col class="c-mark"><col class="c-std"><col class="c-std"><col class="c-std"><col class="c-name"><col class="c-use">
                                            <col class="c-std"><col class="c-std"><col class="c-std"><col class="c-saldo"><col class="c-std"><col>
                                        </colgroup>
                                        <thead>
                                            <tr>
                                                <th></th><th>Buchung <svg class="tri sort"><use href="#i-tri"/></svg></th><th>Wertstell...</th><th>Buchungs...</th><th>Begünstigter/Zahlungspflic...</th><th>Verwendungsz...</th>
                                                <th>Betrag</th><th>Währung</th><th>Auszugsnr.</th><th>Laufender ...</th><th>Anhang</th><th>Kommentar</th>
                                            </tr>
                                        </thead>
                                        <tbody>
                                            <tr class="filter">
                                                <td class="mark"><svg width="7" height="8"><path d="M3.500 4v4" stroke="#000" stroke-width="1.500"/><circle cx="3.500" cy="2.500" r="2" fill="#fff" stroke="#000" stroke-width="1.200"/></svg></td>
                                                <td></td><td></td><td></td><td></td><td></td><td></td><td></td><td></td><td></td><td></td><td></td>
                                            </tr>
                                            <tr class="current">
                                                <td class="mark"><svg width="4" height="8"><use href="#i-tri-r"/></svg></td>
                                                <td>02.10.2023</td><td>30.09.2023</td><td>ABSCHLUSS</td><td></td><td>Abrechnung 29....</td><td class="num">13.608,83 S</td><td>EUR</td><td></td><td class="num">322.606,73 S</td><td class="focus"></td><td></td>
                                            </tr>
                                            <tr>
                                                <td class="mark"></td>
                                                <td>06.07.2023</td><td>06.07.2023</td><td>RECHNUNG</td><td></td><td>Rechnung</td><td class="num">0,77 S</td><td>EUR</td><td></td><td class="num">308.997,90 S</td><td></td><td></td>
                                            </tr>
                                            <tr>
                                                <td class="mark"></td>
                                                <td>06.07.2023</td><td>06.07.2023</td><td>RECHNUNG</td><td></td><td>Rechnung</td><td class="num">0,77 S</td><td>EUR</td><td></td><td class="num">308.997,13 S</td><td></td><td></td>
                                            </tr>
                                            <tr>
                                                <td class="mark"></td>
                                                <td>03.07.2023</td><td>01.07.2023</td><td>ABSCHLUSS</td><td></td><td>Abrechnung 30....</td><td class="num">13.259,56 S</td><td>EUR</td><td></td><td class="num">308.996,36 S</td><td></td><td></td>
                                            </tr>
                                            <tr>
                                                <td class="mark"></td>
                                                <td>03.04.2023</td><td>01.04.2023</td><td>ABSCHLUSS</td><td></td><td>Abrechnung 31....</td><td class="num">14.359,34 S</td><td>EUR</td><td></td><td class="num">295.736,80 S</td><td></td><td></td>
                                            </tr>
                                        </tbody>
                                    </table>
                                    <div class="highlight"></div>
                                </div>
                                <div class="summary"><span>Summe 41....</span></div>
                            </div>
                            <div class="period">
                                <label for="from">Umsätze von:</label>
                                <div class="date">
                                    <svg class="spin" viewBox="0 0 15 14"><path d="M.5 0v13.500h14V0M0 6.500h15M0 8.500h15" fill="none" stroke="#a8a8a8"/><path d="M4 5h7L7.500 1.500zM4 10h7l-3.500 3.500z"/></svg>
                                    <input id="from" type="text" value="03.04.2023">
                                    <svg class="drop"><use href="#i-chev-down"/></svg>
                                </div>
                                <label for="to">bis:</label>
                                <div class="date">
                                    <svg class="spin" viewBox="0 0 15 14"><path d="M.5 0v13.500h14V0M0 6.500h15M0 8.500h15" fill="none" stroke="#a8a8a8"/><path d="M4 5h7L7.500 1.500zM4 10h7l-3.500 3.500z"/></svg>
                                    <input id="to" type="text" value="02.10.2023">
                                    <svg class="drop"><use href="#i-chev-down"/></svg>
                                </div>
                                <div class="range">Anzeigezeitraum: <a href="#">400 Tage</a><br>(keine älteren Umsätze)</div>
                                <button class="show-all" disabled>Alle anzeigen</button>
                                <dl class="totals">
                                    <dt>Startsaldo</dt><dd>281.377,46 S</dd>
                                    <dt>Endsaldo</dt><dd>322.606,73 S</dd>
                                </dl>
                            </div>
                        </div>
                    </div>
                </div>
            </main>
        </div>

        <footer class="statusbar">
            <div>Drücken Sie F1, um Hilfe zu erhalten.</div>
            <div class="counts"><span>Elemente: 5</span><span>Ausgewählt: 1</span></div>
            <div>Star Finanz GmbH</div>
            <div class="dim">SFIRM (SFirm für Anwender Teil 1)</div>
            <div class="dim">UF</div>
            <div>NUM</div>
            <div class="dim">RF</div>
            <svg width="10" height="10"><path d="M7 0h2v2H7zM7 4h2v2H7zM7 8h2v2H7zM3.500 4h2v2h-2zM3.500 8h2v2h-2zM0 8h2v2H0z" fill="#b0b0b0"/></svg>
        </footer>
    </div>
</body>
</html>
```
FILE: styles.css
```css
* {
    box-sizing: border-box;
}
body {
    margin: 0;
    font-family: "Noto Sans", "Open Sans", sans-serif;
    font-size: 11px;
    color: #000;
    background-color: #fff;
}
button {
    font: inherit;
    color: inherit;
    background: none;
    border: none;
    margin: 0;
    padding: 0;
}
h2, ul, dl, dd {
    margin: 0;
    padding: 0;
    font-size: 11px;
    font-weight: normal;
}
svg {
    display: block;
    flex: none;
}
.sprite {
    width: 0;
    height: 0;
}
.ico {
    width: 16px;
    height: 16px;
}
.tri {
    width: 6px;
    height: 3px;
}
.ico-num {
    font: bold 7px "Liberation Sans", sans-serif;
    fill: #fff;
    text-anchor: middle;
}
.ico-pdf {
    font: bold 6px "Liberation Sans", sans-serif;
    fill: #fff;
    text-anchor: middle;
}
.ico-z4 {
    font: bold 6px "Liberation Sans", sans-serif;
    fill: #666;
    text-anchor: middle;
}
.logo-text {
    font: bold 5px "Liberation Sans", sans-serif;
    fill: #d8343c;
    text-anchor: middle;
}
.window {
    height: 100vh;
    display: flex;
    flex-direction: column;
}

/* title bar */
.titlebar {
    display: grid;
    grid-template-columns: auto 1fr auto;
    align-items: center;
    height: 28px;
}
.quick {
    display: flex;
    align-items: center;
    gap: 6px;
    padding-left: 3px;
}
.quick .logo {
    width: 16px;
    height: 16px;
}
.quick-sep {
    width: 1px;
    height: 14px;
    margin-left: -2px;
    background-color: #a0a0a0;
}
.quick-more {
    padding: 0 2px 0 1px;
}
.title {
    padding-left: 26px;
    text-align: center;
}
.win-buttons {
    display: flex;
    justify-content: flex-end;
}
.win-buttons button {
    width: 46px;
    display: flex;
    justify-content: center;
}

/* menu */
.menu {
    display: flex;
    align-items: flex-end;
    height: 24px;
    padding-left: 1px;
    background-color: #dce7f5;
    border-bottom: 1px solid #bfcddd;
}
.menu a {
    height: 23px;
    line-height: 23px;
    padding: 0 14px;
    color: #000;
    text-decoration: none;
    border: 1px solid transparent;
    border-bottom: none;
}
.menu a.active {
    height: 24px;
    margin-bottom: -1px;
    padding: 0 11px;
    background-color: #f5f9fe;
    border-color: #c0cfe0;
    border-radius: 3px 3px 0 0;
}
.menu-tools {
    display: flex;
    gap: 8px;
    margin-left: auto;
    padding: 0 4px 4px 0;
}

/* ribbon */
.ribbon {
    display: grid;
    grid-template-columns: 238px 110px 57px 117px 243px 59px 74px 166px 90px 85px;
    height: 91px;
    padding: 3px 0 2px;
    background: linear-gradient(#eff5fd, #dfe9f6 25%, #d9e5f4 70%, #dfeaf8);
    border-bottom: 2px solid #a3bbd3;
    box-shadow: 0 1px 0 #c9d3de;
}
.group {
    display: flex;
    flex-direction: column;
    border-right: 1px solid #aebfd3;
    box-shadow: 1px 0 0 #f4f8fd;
}
.group h2 {
    line-height: 16px;
    text-align: center;
}
.tools {
    display: flex;
    justify-content: center;
    gap: 4px;
    height: 68px;
    padding-left: 3px;
    white-space: nowrap;
}
.big {
    display: flex;
    flex-direction: column;
    align-items: center;
    padding-top: 4px;
    line-height: 20px;
}
.big svg {
    width: 32px;
    height: 32px;
}
.big .tri {
    width: 6px;
    height: 3px;
}
.stack {
    display: grid;
    grid-template-rows: 22px 22px 22px;
    justify-items: start;
}
.stack button {
    display: flex;
    align-items: center;
    gap: 3px;
    padding: 0 2px;
    border: 1px solid transparent;
}
.stack button:disabled {
    color: #868b92;
}
.stack .pressed {
    background: linear-gradient(#fbd28d, #fbb94f);
    border-color: #c2953f;
    border-radius: 2px;
}

/* sidebar */
.workspace {
    flex: 1;
    min-height: 0;
    display: flex;
    gap: 8px;
    padding: 0 1px 0 1px;
}
.sidebar {
    width: 279px;
    display: flex;
    flex-direction: column;
    border: 1px solid #b4b4b4;
    border-top: none;
}
.side-search {
    display: flex;
    align-items: center;
    gap: 9px;
    height: 36px;
    padding: 2px 8px 0 2px;
    background-color: #f0f0f0;
}
.side-search input {
    flex: 1;
    min-width: 0;
    height: 22px;
    padding: 0 2px;
    font: inherit;
    color: #444;
    border: 1px solid #767676;
}
.side-search svg {
    width: 26px;
    height: 26px;
}
.side-title {
    padding-left: 4px;
    line-height: 20px;
    font-family: "Open Sans", sans-serif;
    font-weight: 600;
    color: #fff;
    background-color: #b4b4b4;
}
.tree-wrap {
    flex: 1;
    min-height: 0;
    display: flex;
}
.tree {
    flex: 1;
    min-width: 0;
    overflow: hidden;
    list-style: none;
    white-space: nowrap;
}
.tree li {
    display: flex;
    align-items: center;
    gap: 5px;
    height: 18px;
    padding-left: 41px;
}
.tree li.top {
    padding-left: 22px;
}
.tree li.open {
    padding-left: 6px;
}
.tree li.open .twist {
    width: 10px;
    height: 10px;
    margin-right: 1px;
}
.tree li.selected {
    margin-left: 39px;
    padding-left: 2px;
    background-color: #d9d9d9;
}
.bold {
    font-family: "Open Sans", sans-serif;
    font-weight: 700;
}
.vscroll {
    width: 16px;
    display: flex;
    flex-direction: column;
    align-items: center;
    padding: 6px 0;
    background-color: #f0f0f0;
}
.vthumb {
    width: 15px;
    height: 72%;
    margin: 5px 0 auto;
    background-color: #cdcdcd;
}
.hscroll {
    display: flex;
    align-items: center;
    height: 16px;
    padding: 0 22px 0 5px;
    background-color: #f0f0f0;
}
.hthumb {
    width: 73%;
    height: 15px;
    margin: 0 auto 0 6px;
    background-color: #cdcdcd;
}
.splitter {
    height: 8px;
    background-color: #f0f0f0;
    border-bottom: 1px solid #b4b4b4;
}
.side-nav button {
    width: 100%;
    height: 31px;
    display: flex;
    align-items: center;
    gap: 4px;
    padding-left: 4px;
    font-family: "Open Sans", sans-serif;
    font-weight: 600;
    background-color: #e1e1e1;
    border: 1px solid #adadad;
    border-width: 1px 0;
}
.side-nav .current {
    background-color: #e5f1fb;
    border: 1px solid #0078d7;
    padding-left: 3px;
}
.side-nav svg {
    width: 24px;
    height: 24px;
}
.side-more {
    display: flex;
    justify-content: flex-end;
    height: 28px;
    padding: 6px 7px 0 0;
}

/* document area */
.document {
    flex: 1;
    min-width: 0;
    display: flex;
    flex-direction: column;
    margin-top: 1px;
    font-family: "DejaVu Sans Condensed", "DejaVu Sans", sans-serif;
    border: 1px solid #b0b0b0;
    background-color: #fafafa;
}
.doc-tabs {
    display: flex;
    align-items: flex-end;
    height: 23px;
    padding-left: 4px;
    background-color: #f7f7f7;
    border-bottom: 1px solid #a6a6a6;
}
.slant {
    width: 22px;
    height: 22px;
    margin-bottom: -1px;
}
.doc-tab {
    display: flex;
    align-items: center;
    height: 22px;
    margin-bottom: -1px;
    padding: 0 2px 1px 0;
    font-family: "Open Sans", sans-serif;
    font-weight: 600;
    background-color: #fff;
    border-top: 1px solid #a6a6a6;
    border-right: 1px solid #a6a6a6;
}
.doc-tab span {
    margin: 0 6px 0 11px;
}
.doc-tab button {
    width: 15px;
    height: 15px;
    line-height: 13px;
    color: #fff;
    background-color: #c75050;
}
.doc-list {
    margin-left: auto;
    padding: 0 7px 9px;
}
.frame {
    flex: 1;
    min-height: 0;
    display: flex;
    flex-direction: column;
    margin: 2px 3px 3px 2px;
    background-color: #f0f0f0;
    border: 2px solid #696969;
    border-right: 1px solid #dcdcdc;
    border-bottom: 1px solid #dcdcdc;
}
.toolbar {
    display: flex;
    align-items: center;
    gap: 5px;
    height: 32px;
    padding: 0 4px 4px 5px;
}
.nav-btn {
    display: flex;
    align-items: center;
    justify-content: center;
    gap: 3px;
    width: 33px;
    height: 20px;
    background: linear-gradient(#f6f6f6, #dedede);
    border: 1px solid #707070;
    border-radius: 2px;
}
.nav-btn:disabled {
    color: #c4c4c4;
    border-color: #c8c8c8;
    background: #ececec;
}
.crumbs {
    margin-left: 2px;
    color: #1f4fb5;
}
.fulltext {
    width: 252px;
    height: 20px;
    margin-left: auto;
    padding: 0 2px;
    font: inherit;
    border: 1px solid #bdbdbd;
    border-top-color: #696969;
}
.panel {
    flex: 1;
    min-height: 0;
    display: flex;
    flex-direction: column;
    margin: 0 1px 2px 0;
    padding: 0 4px 3px 3px;
    border: 1px solid #dcdcdc;
    border-top: 2px solid #696969;
    border-left: 1px solid #696969;
}
.info {
    display: grid;
    grid-template-columns: 261px 300px 1fr;
    column-gap: 74px;
    height: 64px;
    padding: 9px 0 0 5px;
    line-height: 13px;
}
.info > :nth-child(3) {
    margin-left: -74px;
}
.account, .bank {
    display: grid;
    grid-template-columns: auto 1fr;
    align-content: start;
}
.account dd {
    text-align: right;
}
.bank {
    grid-template-columns: 40px 1fr;
}
address {
    font-style: normal;
}
.tabs {
    display: flex;
    align-items: flex-end;
    height: 21px;
}
.tab-list {
    flex: 1;
    min-width: 0;
    display: flex;
    align-items: flex-end;
    overflow: hidden;
    white-space: nowrap;
}
.tab-list button {
    flex: none;
    display: flex;
    align-items: center;
    gap: 5px;
    height: 19px;
    padding: 0 4px;
    border: 1px solid #d9d9d9;
    border-bottom: none;
    border-right: none;
}
.tab-list .active {
    height: 21px;
    padding: 0 5px 2px;
    background-color: #fff;
}
.neu {
    padding: 0 1px;
    line-height: 9px;
    font-size: 8px;
    color: #fff;
    background-color: #2f8f22;
    border: 1px solid #1d6414;
}
.tab-arrow {
    width: 16px;
    height: 16px;
    margin-bottom: 3px;
    display: flex;
    align-items: center;
    justify-content: center;
    background-color: #f0f0f0;
    border: 1px solid #adadad;
}
.tab-page {
    flex: 1;
    min-height: 0;
    display: flex;
    flex-direction: column;
    border: 1px solid #d9d9d9;
    border-left: none;
    box-shadow: inset -1px 0 0 #fff, inset 0 1px 0 #fff;
    padding: 1px 5px 2px 2px;
}
.state {
    display: flex;
    align-items: center;
    height: 26px;
    padding-left: 4px;
    white-space: nowrap;
}
.state strong {
    margin-left: 3px;
    font-family: "Open Sans", sans-serif;
}
.state svg {
    width: 13px;
    height: 14px;
    margin: 0 2px 0 9px;
}
.state a {
    color: #0000ff;
}
.grid {
    flex: 1;
    min-height: 0;
    display: flex;
    flex-direction: column;
    background-color: #fff;
    border: 1px solid #d5d5d5;
}
.group-hint {
    height: 33px;
    line-height: 34px;
    padding-left: 4px;
    color: #808080;
    background-color: #f7f7f7;
}

/* booking table */
.table-wrap {
    flex: 1;
    position: relative;
}
table {
    width: 100%;
    table-layout: fixed;
    border-collapse: separate;
    border-spacing: 0;
}
.c-mark {
    width: 16px;
}
.c-std {
    width: 75px;
}
.c-name {
    width: 155px;
}
.c-use {
    width: 98px;
}
.c-saldo {
    width: 81px;
}
th, td {
    height: 21px;
    padding: 0 3px;
    overflow: hidden;
    white-space: nowrap;
    font-weight: normal;
    text-align: left;
    border-right: 1px solid #dadada;
    border-bottom: 1px solid #dadada;
}
th:last-child, td:last-child {
    border-right: none;
}
th {
    height: 17px;
    padding: 0 2px;
    background: linear-gradient(#fff 50%, #f1f3f5);
    border-right-color: #e5e7e9;
    border-bottom-color: #cfcfcf;
}
.sort {
    display: inline-block;
    width: 7px;
    height: 4px;
    margin: 0 0 2px 4px;
}
.mark {
    padding: 0 5px;
    background: linear-gradient(#fff 40%, #f1f3f5);
}
.mark svg {
    margin: auto;
}
tbody tr:nth-child(odd) td:not(.mark) {
    background-color: #efefef;
}
tbody .filter td:not(.mark) {
    background-color: #fff !important;
}
.num {
    text-align: right;
    color: #ff0000;
}
tbody .current td:not(.mark) {
    color: #fff;
    background-color: #0078d7;
}
.focus {
    outline: 1px dotted #fff;
    outline-offset: -1px;
}
.highlight {
    position: absolute;
    top: -4px;
    right: -5px;
    width: 93px;
    height: 148px;
    border: 2px solid #ff3333;
    box-shadow: 2px 2px 3px rgba(0, 0, 0, 0.4);
}
.summary {
    height: 31px;
    padding: 7px 0 0 493px;
    color: #444;
    background: linear-gradient(#fff 25%, #f8f9fa 30%, #f0f1f4);
    border-top: 1px solid #e6e6e6;
}
.summary span {
    display: inline-block;
    padding: 2px 2px 2px 7px;
    border-right: 1px solid #d0d0d0;
}

/* period line below the table */
.period {
    display: flex;
    align-items: center;
    height: 40px;
    padding: 2px 0 0 4px;
    line-height: 18px;
    white-space: nowrap;
}
.period label {
    margin-right: 2px;
}
.date {
    width: 105px;
    height: 21px;
    display: flex;
    align-items: center;
    margin-right: 3px;
    padding: 0 3px;
    background-color: #fff;
    border: 1px solid #767676;
}
.date input {
    flex: 1;
    min-width: 0;
    padding: 0 0 0 3px;
    font: inherit;
    border: none;
}
.spin {
    width: 15px;
    height: 14px;
}
.drop {
    width: 10px;
    height: 10px;
}
.range {
    margin: -4px 0 0 11px;
}
.range a {
    color: #0066cc;
}
.show-all {
    width: 81px;
    height: 21px;
    margin-left: 48px;
    color: #838383;
    background-color: #cccccc;
    border: 1px solid #bfbfbf;
}
.totals {
    display: grid;
    grid-template-columns: auto auto;
    column-gap: 86px;
    margin: -4px 5px 0 auto;
}
.totals dd {
    text-align: right;
    color: #ff0000;
}

/* status bar */
.statusbar {
    display: grid;
    grid-template-columns: 287px 1fr 206px 236px 20px 33px 20px 17px;
    align-items: center;
    height: 23px;
    white-space: nowrap;
    background-color: #f0f0f0;
    border-top: 1px solid #d7d7d7;
}
.statusbar div {
    height: 20px;
    line-height: 20px;
    padding-left: 4px;
    border-right: 1px solid #d7d7d7;
}
.statusbar div:first-child {
    padding-left: 7px;
}
.statusbar .counts {
    display: flex;
    gap: 9px;
    padding-left: 23px;
}
.statusbar svg {
    margin: 8px 0 0 6px;
}
.dim {
    color: #6d6d6d;
}
```
